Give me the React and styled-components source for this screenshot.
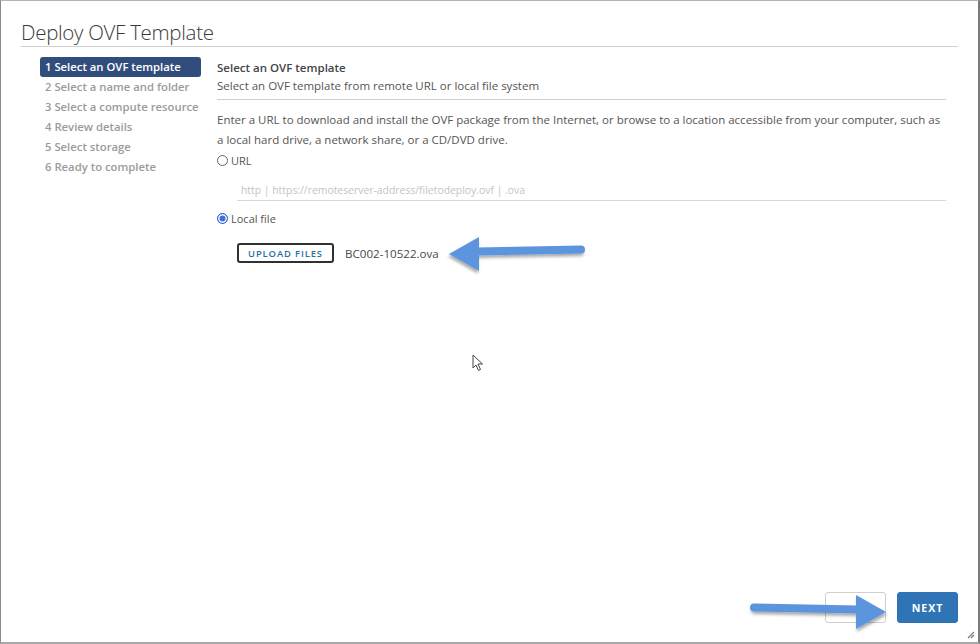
import styled, { createGlobalStyle } from "styled-components";

const Global = createGlobalStyle`
  html, body { margin: 0; padding: 0; background: #fff; }
  body { font-family: "Open Sans", "Liberation Sans", sans-serif; }
  * { box-sizing: border-box; }
`;

const Window = styled.div`
  position: relative;
  width: 980px;
  height: 644px;
  border-top: 1px solid #b4b4b4;
  border-left: 1px solid #8a8a8a;
  border-right: 2px solid #7a7a7a;
  border-bottom: 2px solid #a8a8a8;
  display: flex;
  flex-direction: column;
  background: #fff;
`;

const Header = styled.div`
  padding: 17px 20px 0 20px;
`;

const Title = styled.h1`
  margin: 0;
  font-size: 20.5px;
  line-height: 28px;
  font-weight: 300;
  color: #3a3a3a;
  border-bottom: 1px solid #cfcfcf;
  letter-spacing: -0.3px;
`;

const Body = styled.div`
  flex: 1;
  display: grid;
  grid-template-columns: 161px 1fr;
  column-gap: 16px;
  padding: 10px 32px 0 39px;
`;

const Nav = styled.div`
  display: flex;
  flex-direction: column;
`;

const NavItem = styled.div`
  height: 20px;
  line-height: 20px;
  padding-left: 5px;
  font-size: 11.3px;
  font-weight: 600;
  border-radius: 3px;
  white-space: nowrap;
  color: ${(p) => (p.$active ? "#fff" : "#9b9b9b")};
  background: ${(p) => (p.$active ? "#314d7c" : "transparent")};
`;

const Content = styled.div`
  padding-top: 2px;
  font-size: 11.5px;
  color: #555;
`;

const StepTitle = styled.div`
  font-weight: 600;
  color: #444;
  line-height: 18px;
`;

const StepSub = styled.div`
  line-height: 18px;
  padding-bottom: 4px;
  color: #555;
  border-bottom: 1px solid #cfcfcf;
`;

const Para = styled.p`
  margin: 10px 0 0;
  line-height: 20px;
`;

const RadioRow = styled.label`
  display: flex;
  align-items: center;
  gap: 3px;
  height: 20px;
  margin-top: ${(p) => p.$top || 0}px;
  color: #555;
  font-size: 11px;
`;

const Radio = styled.span`
  width: 11px;
  height: 11px;
  border-radius: 50%;
  border: 1px solid ${(p) => (p.$on ? "#2860d8" : "#666")};
  background: ${(p) => (p.$on ? "#3b6fe0" : "#fff")};
  box-shadow: ${(p) => (p.$on ? "inset 0 0 0 1.5px #fff" : "none")};
`;

const UrlInput = styled.div`
  margin: 7px 0 0 20px;
  height: 24px;
  line-height: 26px;
  padding-left: 4px;
  border-bottom: 1px solid #d6d6d6;
  color: #c4c4c4;
  font-size: 10.4px;
`;

const UploadRow = styled.div`
  display: flex;
  align-items: center;
  gap: 11px;
  margin: 15px 0 0 20px;
`;

const UploadButton = styled.button`
  height: 20px;
  width: 97px;
  padding: 0;
  border: 2px solid #303030;
  border-radius: 3px;
  background: #fff;
  color: #1f6fa8;
  font-family: inherit;
  font-size: 9.4px;
  font-weight: 600;
  letter-spacing: 0.9px;
`;

const FileName = styled.span`
  font-size: 11.6px;
  color: #4a4a4a;
`;

const Footer = styled.div`
  display: flex;
  justify-content: flex-end;
  gap: 11px;
  padding: 0 20px 19px 0;
`;

const FooterButton = styled.button`
  width: 61px;
  height: 31px;
  border-radius: 3px;
  font-family: inherit;
  font-size: 10.6px;
  font-weight: 700;
  letter-spacing: 1px;
  color: #fff;
  border: 1px solid ${(p) => (p.$primary ? "#2e72b3" : "#d0d0d0")};
  background: ${(p) => (p.$primary ? "#2f74b5" : "#fff")};
`;

const Overlay = styled.svg`
  position: absolute;
  left: ${(p) => p.$x}px;
  top: ${(p) => p.$y}px;
  overflow: visible;
  pointer-events: none;
`;

const Grip = styled.svg`
  position: absolute;
  right: 3px;
  bottom: 3px;
`;

const steps = [
  "1 Select an OVF template",
  "2 Select a name and folder",
  "3 Select a compute resource",
  "4 Review details",
  "5 Select storage",
  "6 Ready to complete",
];

function Arrow({ x, y, flip }) {
  // shaft with rounded end and a triangular head, drawn pointing left
  return (
    <Overlay
      $x={x}
      $y={y}
      width="140"
      height="40"
      viewBox="0 0 140 40"
      style={flip ? { transform: "scaleX(-1)" } : undefined}
    >
      <defs>
        <filter id={flip ? "shR" : "shL"} x="-20%" y="-40%" width="140%" height="180%">
          <feDropShadow dx="-1" dy="2.5" stdDeviation="1.6" floodColor="#000" floodOpacity="0.35" />
        </filter>
      </defs>
      <g filter={`url(#${flip ? "shR" : "shL"})`}>
        <path d="M30 16.5 L133 14.5" stroke="#5b95dd" strokeWidth="8" strokeLinecap="round" fill="none" />
        <path d="M1 19 L31 2 L31 36 Z" fill="#5b95dd" />
      </g>
    </Overlay>
  );
}

export default function App() {
  return (
    <>
      <Global />
      <Window>
        <Header>
          <Title>Deploy OVF Template</Title>
        </Header>
        <Body>
          <Nav>
            {steps.map((s, i) => (
              <NavItem key={s} $active={i === 0}>
                {s}
              </NavItem>
            ))}
          </Nav>
          <Content>
            <StepTitle>Select an OVF template</StepTitle>
            <StepSub>Select an OVF template from remote URL or local file system</StepSub>
            <Para>
              Enter a URL to download and install the OVF package from the Internet, or browse to a location
              accessible from your computer, such as a local hard drive, a network share, or a CD/DVD drive.
            </Para>
            <RadioRow>
              <Radio />
              URL
            </RadioRow>
            <UrlInput>http | https://remoteserver-address/filetodeploy.ovf | .ova</UrlInput>
            <RadioRow $top={7}>
              <Radio $on />
              Local file
            </RadioRow>
            <UploadRow>
              <UploadButton>UPLOAD FILES</UploadButton>
              <FileName>BC002-10522.ova</FileName>
            </UploadRow>
          </Content>
        </Body>
        <Footer>
          <FooterButton />
          <FooterButton $primary>NEXT</FooterButton>
        </Footer>

        <Arrow x={447} y={234} />
        <Arrow x={746} y={592} flip />

        <Overlay $x={471} $y={353} width="12" height="18" viewBox="0 0 12 18">
          <path d="M1 1 L1 14 L4 11 L6.5 16.5 L8.5 15.5 L6 10 L10.5 10 Z" fill="#fff" stroke="#444" strokeWidth="1" />
        </Overlay>

        <Grip width="8" height="8" viewBox="0 0 8 8">
          <path d="M7 1 L1 7 M7 4 L4 7" stroke="#777" strokeWidth="1.2" />
        </Grip>
      </Window>
    </>
  );
}
